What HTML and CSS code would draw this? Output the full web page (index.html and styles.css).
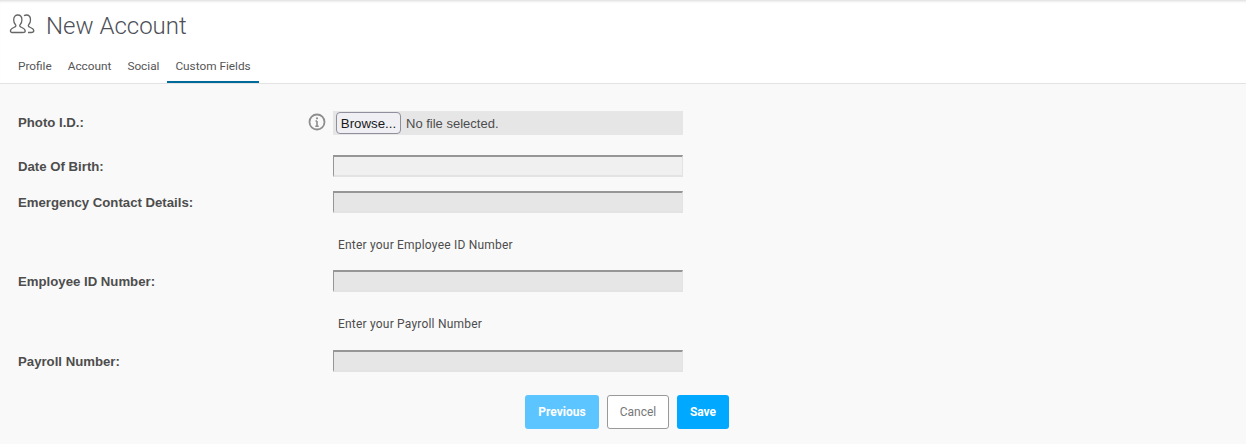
FILE: index.html
```html
<!DOCTYPE html>
<html lang="en">
<head>
<meta charset="utf-8">
<title>New Account</title>
<link rel="stylesheet" href="styles.css">
</head>
<body>
<header class="top">
  <div class="title-row">
    <svg class="title-icon" width="27" height="24" viewBox="0 0 27 24" fill="none" stroke="#666" stroke-width="1.300">
      <path d="M4 20.500c-1.600 0-2.600-.6-2.600-1.600 0-2.400 3-3.200 5-4.200.6-.4.6-1.400.1-2-1.200-1.300-1.800-3-1.800-4.800C4.700 4.600 6.500 3 8.800 3s4.100 1.600 4.100 4.900c0 1.800-.6 3.500-1.800 4.800-.5.6-.5 1.600.1 2 2 1 5 1.800 5 4.200 0 1-1 1.600-2.600 1.600z"/>
      <path d="M15 3.800c.7-.5 1.500-.8 2.400-.8 2.300 0 4.100 1.600 4.100 4.900 0 1.800-.6 3.500-1.800 4.800-.5.6-.5 1.600.1 2 1.800.9 5 1.600 5 4 0 1.100-1 1.800-2.600 1.800h-3.200"/>
    </svg>
    <h1 class="title">New Account</h1>
  </div>
  <nav class="tabs">
    <a class="tab">Profile</a>
    <a class="tab">Account</a>
    <a class="tab">Social</a>
    <a class="tab active">Custom Fields</a>
  </nav>
</header>
<main class="form">
  <div class="row row-photo">
    <label class="label label-photo">Photo I.D.:</label>
    <span class="info">
      <svg width="18" height="18" viewBox="0 0 18 18" fill="none" stroke="#8e8e8e">
        <circle cx="9" cy="9" r="7.500" stroke-width="1.800"/>
        <path d="M9 8v5M7.300 13.200h3.400M7.500 8H9" stroke-width="1.600"/>
        <circle cx="9" cy="5.300" r="1.100" fill="#8e8e8e" stroke="none"/>
      </svg>
    </span>
    <div class="file"><span class="browse">Browse...</span><span class="file-text">No file selected.</span></div>
  </div>
  <div class="row row-dob">
    <label class="label">Date Of Birth:</label>
    <input class="field field-light" type="text">
  </div>
  <div class="row row-ec">
    <label class="label">Emergency Contact Details:</label>
    <input class="field" type="text">
  </div>
  <p class="hint hint-first">Enter your Employee ID Number</p>
  <div class="row row-hinted">
    <label class="label">Employee ID Number:</label>
    <input class="field" type="text">
  </div>
  <p class="hint hint-second">Enter your Payroll Number</p>
  <div class="row row-hinted">
    <label class="label">Payroll Number:</label>
    <input class="field" type="text">
  </div>
  <div class="actions">
    <button class="btn btn-prev" type="button">Previous</button>
    <button class="btn btn-cancel" type="button">Cancel</button>
    <button class="btn btn-save" type="button">Save</button>
  </div>
</main>
</body>
</html>
```
FILE: styles.css
```css
* { box-sizing: border-box; }
html, body { margin: 0; padding: 0; }
body {
  width: 1246px;
  height: 444px;
  overflow: hidden;
  background: #f9f9f9;
  font-family: Roboto, "Liberation Sans", sans-serif;
  color: #4d4d4d;
}
.top {
  height: 84px;
  background: #fff;
  border-bottom: 1px solid #e3e3e3;
  box-shadow: inset 0 3px 3px -2px #d8d8d8;
}
.title-row {
  display: flex;
  align-items: center;
  height: 52px;
  padding-left: 9px;
}
.title-icon { margin-right: 10px; margin-top: -4px; }
.title {
  margin: 0;
  font-size: 24px;
  font-weight: 300;
  line-height: 52px;
  color: #4d5058;
}
.tabs {
  display: flex;
  height: 31px;
  padding-left: 10px;
}
.tab {
  padding: 0 8px;
  font-size: 11.800px;
  line-height: 28px;
  color: #555;
}
.tab.active { border-bottom: 2px solid #006a9c; height: 31px; }
.form { padding-top: 27px; }
.row {
  display: flex;
  align-items: center;
  position: relative;
  padding-left: 18px;
}
.label {
  width: 315px;
  font-family: "Liberation Sans", Arial, sans-serif;
  font-size: 13.200px;
  font-weight: 700;
  color: #4d4d4d;
}
.label-photo { align-self: flex-start; line-height: 23px; }
.row-photo { height: 24px; }
.info {
  position: absolute;
  left: 308px;
  top: 2px;
  width: 18px;
  height: 18px;
}
.info svg { display: block; }
.file {
  display: flex;
  align-items: center;
  width: 350px;
  height: 24px;
  background: #e6e6e6;
  padding-left: 3px;
  font-family: "Liberation Sans", Arial, sans-serif;
}
.browse {
  display: block;
  width: 65px;
  height: 22px;
  line-height: 22px;
  text-align: center;
  background: #f0f0f4;
  border: 1px solid #8f8f9d;
  border-radius: 4px;
  color: #1a1a1a;
  font-size: 13.300px;
}
.file-text { margin-left: 5px; color: #4d4d4d; font-size: 13px; }
.field {
  display: block;
  width: 350px;
  height: 22px;
  margin: 0;
  padding: 0;
  background: #e6e6e6;
  border-style: solid;
  border-color: #969696 #e3e3e3 #e3e3e3 #969696;
  border-width: 2px 1px 2px 1px;
}
.field-light { background: #f0f0f0; }
.row-dob { margin-top: 20px; }
.row-ec { margin-top: 14px; }
.hint {
  margin: 0;
  padding-left: 338px;
  font-size: 12px;
  letter-spacing: 0.2px;
  line-height: 14px;
  color: #4d4d4d;
}
.hint-first { margin-top: 25px; }
.hint-second { margin-top: 25px; }
.row-hinted { margin-top: 18px; }
.hint-second + .row-hinted { margin-top: 19px; }
.actions {
  display: flex;
  justify-content: center;
  gap: 8px;
  margin-top: 23px;
  padding-left: 8px;
}
.btn {
  height: 34px;
  padding: 0;
  border-radius: 3px;
  font-family: Roboto, "Liberation Sans", sans-serif;
  font-size: 12px;
  font-weight: 700;
  color: #fff;
  border: 0;
}
.btn-prev { width: 74px; background: #5cc5ff; }
.btn-cancel { width: 62px; background: #fff; border: 1px solid #999; color: #777; font-weight: 400; }
.btn-save { width: 52px; background: #00a8ff; }
```
